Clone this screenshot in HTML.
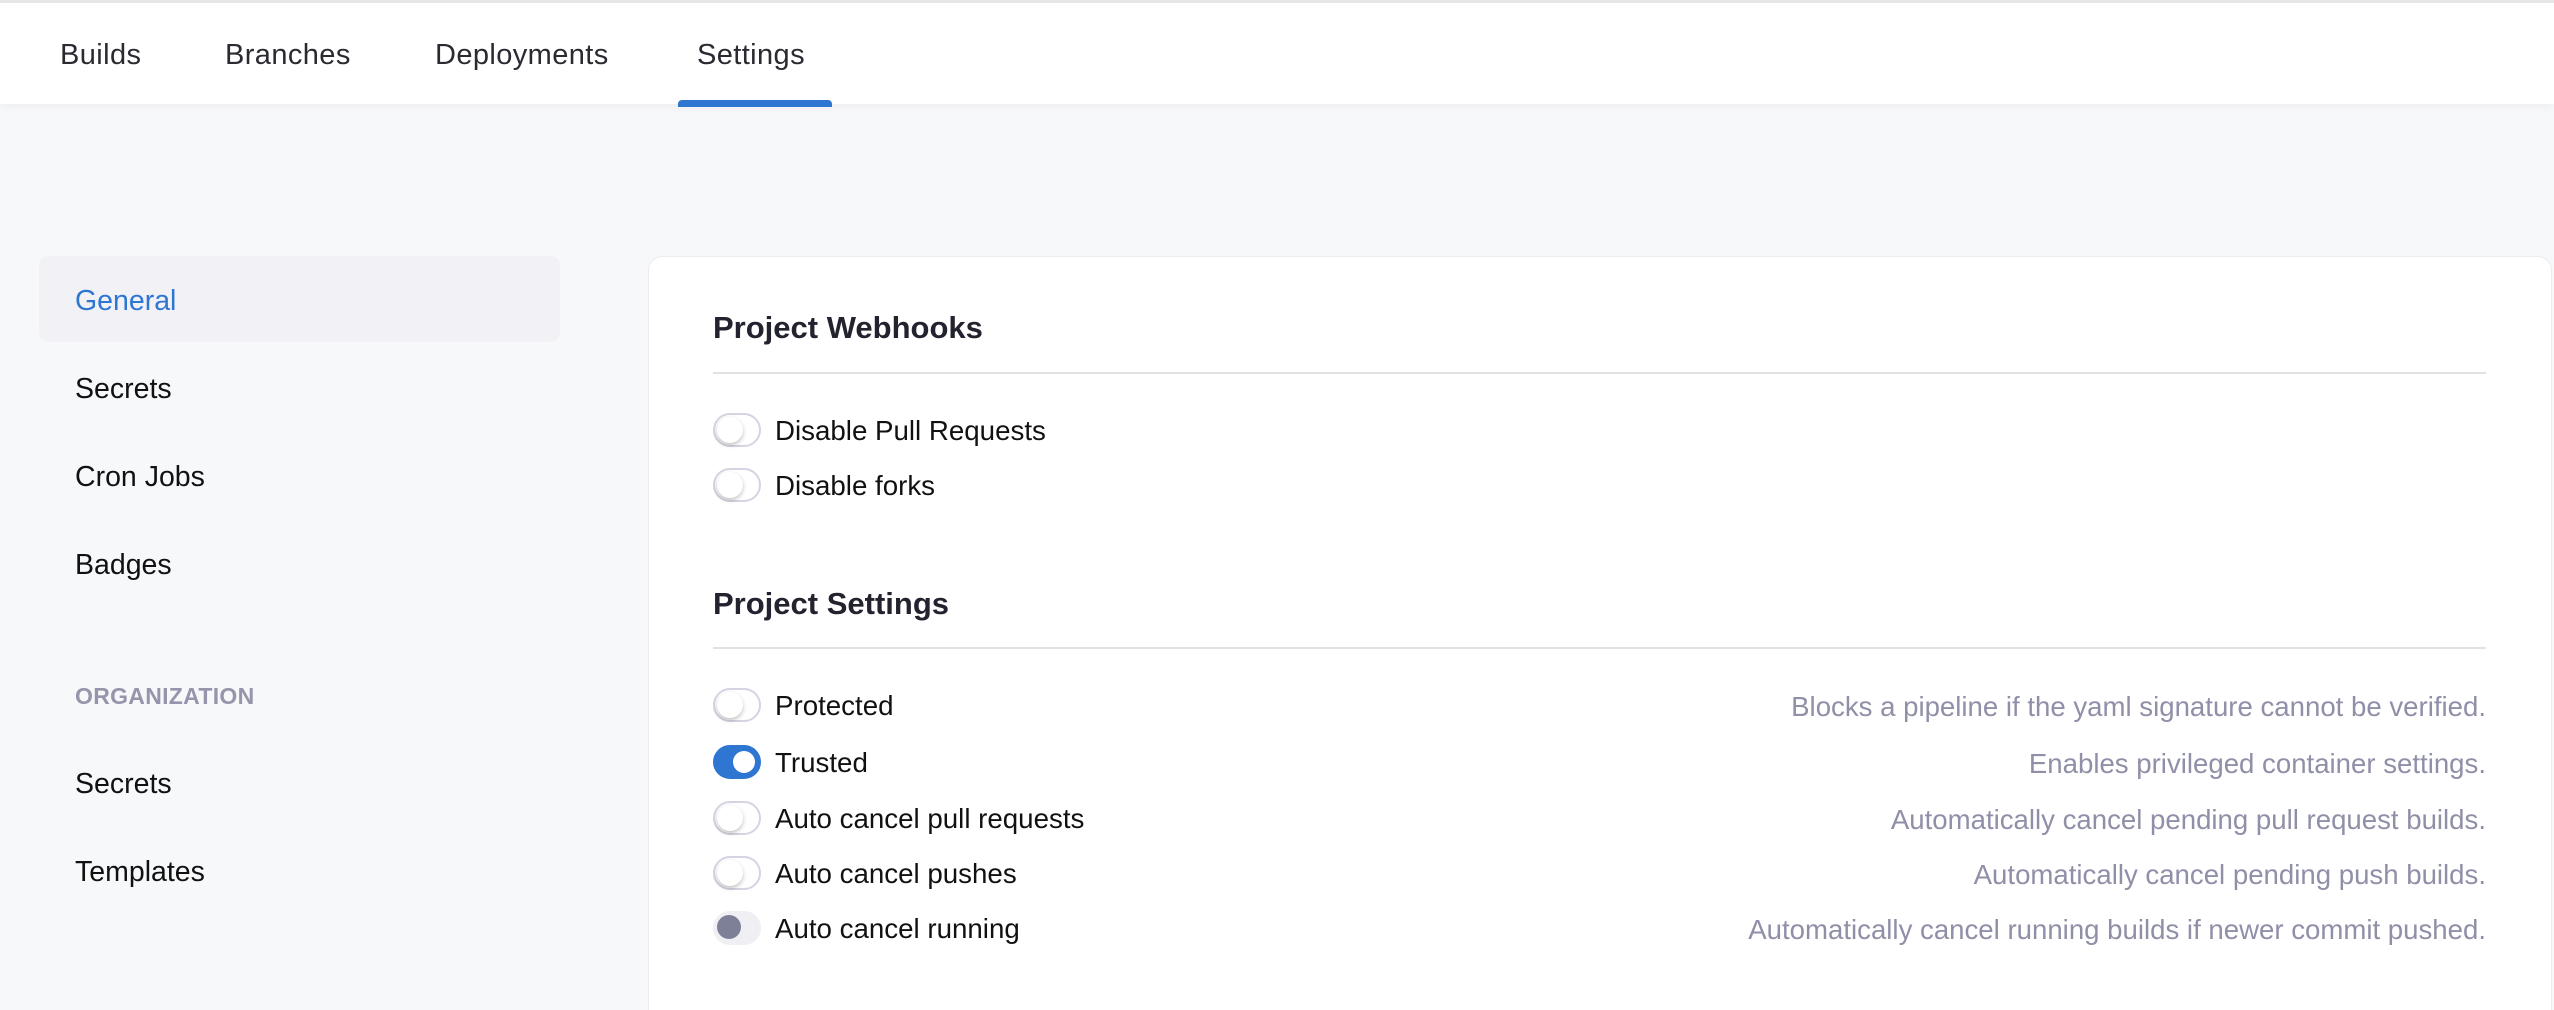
<!DOCTYPE html>
<html style="width:2554px;height:1010px;overflow:hidden"><head><meta charset="utf-8"><style>
*{box-sizing:border-box;margin:0;padding:0}
body{width:2554px;height:1010px;overflow:hidden;background:#f7f8fa;font-family:"Liberation Sans",sans-serif;color:#111;position:relative}
.nav{position:absolute;left:0;top:0;width:2554px;height:104px;background:#fff;border-top:3px solid #e6e6e8;box-shadow:0 2px 10px rgba(0,0,0,.05)}
.tab{position:absolute;top:36px;font-size:29px;color:#2a2a33;letter-spacing:.4px}
.ul{position:absolute;left:678px;top:97px;width:154px;height:7px;background:#2f76d2;border-radius:4px 4px 0 0}
.side{position:absolute;font-size:28.5px;color:#111}
.gen{position:absolute;left:39px;top:256px;width:521px;height:86px;background:#f1f1f6;border-radius:10px}
.org{position:absolute;left:75px;top:683px;font-size:23px;font-weight:bold;color:#9595ab;letter-spacing:.3px}
.card{position:absolute;left:648px;top:256px;width:1904px;height:780px;background:#fff;border:1px solid #ececf0;border-radius:14px}
.h{position:absolute;left:713px;font-size:31px;font-weight:bold;color:#23232f}
.hr{position:absolute;left:713px;width:1773px;height:2px;background:#e2e2e6}
.row{position:absolute;left:713px;width:1773px;height:36px}
.tg{position:absolute;left:0;top:1px;width:48px;height:34px;border:2px solid #d4d4e2;border-radius:17px;background:#fff}
.tg::after{content:"";position:absolute;left:2px;top:2px;width:26px;height:26px;border-radius:50%;background:#fff;box-shadow:0 2px 4px rgba(0,0,0,.25)}
.tg.on{background:#2f76d2;border-color:#2f76d2}
.tg.on::after{left:18px;top:4px;width:22px;height:22px;box-shadow:none}
.tg.dis{background:#efeff4;border-color:#efeff4}
.tg.dis::after{background:#7e8098;box-shadow:none;left:2px;top:2px;width:24px;height:24px}
.lab{position:absolute;left:62px;top:3px;font-size:27.7px;color:#111}
.desc{position:absolute;right:0;top:4px;font-size:27.6px;color:#8f8fa8}
</style></head><body>
<div class="nav">
<span class="tab" style="left:60px">Builds</span>
<span class="tab" style="left:225px">Branches</span>
<span class="tab" style="left:435px">Deployments</span>
<span class="tab" style="left:697px">Settings</span>
<div class="ul"></div>
</div>
<div class="gen"></div>
<div class="side" style="left:75px;top:285px;color:#2f76d2">General</div>
<div class="side" style="left:75px;top:373px">Secrets</div>
<div class="side" style="left:75px;top:461px">Cron Jobs</div>
<div class="side" style="left:75px;top:549px">Badges</div>
<div class="org">ORGANIZATION</div>
<div class="side" style="left:75px;top:768px">Secrets</div>
<div class="side" style="left:75px;top:856px">Templates</div>
<div class="card"></div>
<div class="h" style="top:310px">Project Webhooks</div>
<div class="hr" style="top:372px"></div>
<div class="row" style="top:412px"><div class="tg"></div><span class="lab">Disable Pull Requests</span></div>
<div class="row" style="top:467px"><div class="tg"></div><span class="lab">Disable forks</span></div>
<div class="h" style="top:586px">Project Settings</div>
<div class="hr" style="top:647px"></div>
<div class="row" style="top:687px"><div class="tg"></div><span class="lab">Protected</span><span class="desc">Blocks a pipeline if the yaml signature cannot be verified.</span></div>
<div class="row" style="top:744px"><div class="tg on"></div><span class="lab">Trusted</span><span class="desc">Enables privileged container settings.</span></div>
<div class="row" style="top:800px"><div class="tg"></div><span class="lab">Auto cancel pull requests</span><span class="desc">Automatically cancel pending pull request builds.</span></div>
<div class="row" style="top:855px"><div class="tg"></div><span class="lab">Auto cancel pushes</span><span class="desc">Automatically cancel pending push builds.</span></div>
<div class="row" style="top:910px"><div class="tg dis"></div><span class="lab">Auto cancel running</span><span class="desc">Automatically cancel running builds if newer commit pushed.</span></div>
</body></html>
